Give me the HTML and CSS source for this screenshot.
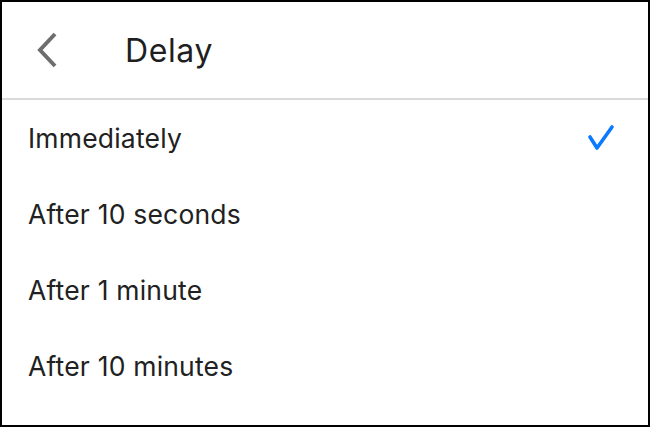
FILE: index.html
```html
<!DOCTYPE html>
<html lang="en">
<head>
  <meta charset="UTF-8" />
  <title>Delay</title>
  <link rel="stylesheet" href="styles.css">
</head>
<body>
  <div class="screen">
    <!-- header -->
    <div class="header">
      <span class="back">
        <svg width="24" height="36" viewBox="0 0 24 36">
          <path d="M20 2 L5 18 L20 34" fill="none" stroke="#6e6e6e" stroke-width="4" />
        </svg>
      </span>
      <h1 class="title">Delay</h1>
    </div>

    <!-- options -->
    <ul class="options">
      <li class="option">
        <span>Immediately</span>
        <svg class="check" width="30" height="30" viewBox="0 0 30 30">
          <path d="M4 14 L11 25 L26 4" fill="none" stroke="#0a7aff" stroke-width="3.6" stroke-linecap="round" stroke-linejoin="round" />
        </svg>
      </li>
      <li class="option"><span>After 10 seconds</span></li>
      <li class="option"><span>After 1 minute</span></li>
      <li class="option"><span>After 10 minutes</span></li>
    </ul>
  </div>
</body>
</html>
```

FILE: styles.css
```css
* {
  margin: 0;
  padding: 0;
  box-sizing: border-box;
}

body {
  font-family: Inter, Roboto, "Liberation Sans", sans-serif;
  background: #fff;
  color: #212121;
}

.screen {
  width: 650px;
  height: 427px;
  border: 2px solid #000;
  overflow: hidden;
}

.header {
  height: 98px;
  display: flex;
  align-items: center;
  border-bottom: 2px solid #dadada;
  padding-left: 33px;
}

.back {
  display: flex;
  width: 24px;
  height: 36px;
}

.title {
  font-size: 32px;
  font-weight: 400;
  letter-spacing: 0.6px;
  margin-left: 66px;
  color: #1f1f1f;
}

.options {
  list-style: none;
}

.option {
  height: 76px;
  display: flex;
  align-items: center;
  justify-content: space-between;
  padding: 0 32px 0 26px;
  font-size: 26.5px;
  letter-spacing: 0.2px;
  color: #212121;
}

.check {
  display: block;
}
```
